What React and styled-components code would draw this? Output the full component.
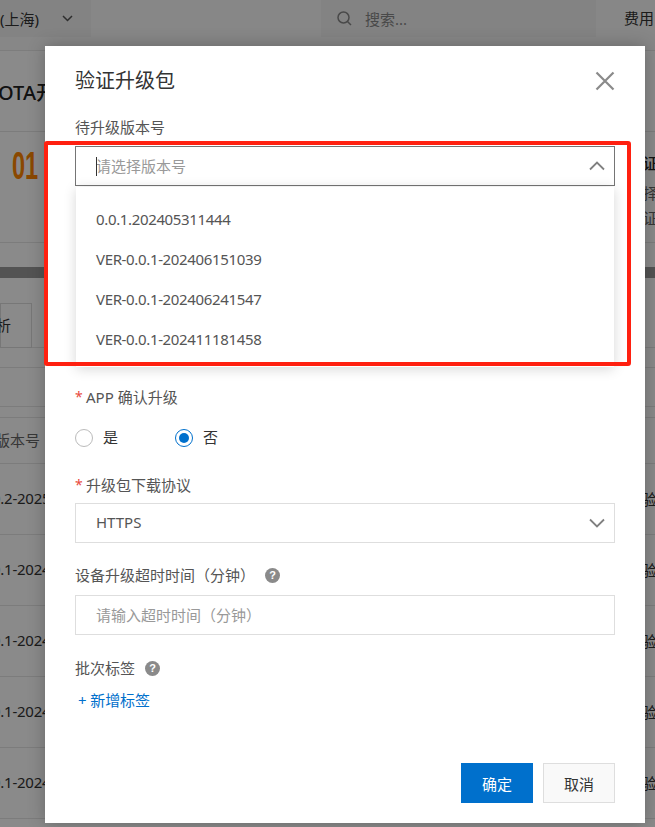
import React from "react";
import styled, { createGlobalStyle } from "styled-components";

const FONT = `"Noto Sans", "Noto Sans CJK SC", sans-serif`;
const VERSIONS = [
	"0.0.1.202405311444",
	"VER-0.0.1-202406151039",
	"VER-0.0.1-202406241547",
	"VER-0.0.1-202411181458",
];
const ROWS = ["0.2-2025", "0.1-2024", "0.1-2024", "0.1-2024", "0.1-2024"];

const Global = createGlobalStyle`
	html, body {
		margin: 0;
		padding: 0;
		height: 100%;
		overflow: hidden;
		background: #fff;
	}
	* {
		box-sizing: border-box;
	}
`;

const Page = styled.div`
	width: 655px;
	height: 827px;
	overflow: hidden;
	position: relative;
	font-family: ${FONT};
	font-size: 15px;
	color: #333;
`;

const TopBar = styled.div`
	height: 51px;
	display: flex;
	background: #fafafa;
	border-bottom: 1px solid #e8e8e8;
	align-items: flex-start;
`;

const RegionSelect = styled.div`
	width: 91px;
	height: 37px;
	background: #f2f2f2;
	display: flex;
	align-items: center;
	justify-content: space-between;
	padding: 0 18px 0 0;
	white-space: nowrap;
`;

const RegionChevron = styled.svg`
	width: 11px;
	height: 7px;
`;

const SearchBox = styled.div`
	width: 275px;
	height: 37px;
	margin-left: 230px;
	background: #f2f2f2;
	display: flex;
	align-items: center;
	gap: 13px;
	padding-left: 16px;
	color: #888;
`;

const Fee = styled.div`
	margin-left: 28px;
	height: 37px;
	line-height: 37px;
	white-space: nowrap;
`;

const TitleRow = styled.div`
	height: 81px;
	display: flex;
	align-items: center;
	border-bottom: 1px solid #e5e5e5;
	background: #fff;
	font-size: 20px;
	font-weight: 500;
	margin-left: -2px;
	white-space: nowrap;
	color: #222;
`;

const StepRow = styled.div`
	height: 111px;
	display: flex;
	justify-content: space-between;
	background: #fff;
	border-bottom: 1px solid #e5e5e5;
`;

const StepNumber = styled.div`
	margin: 12px 0 0 12px;
	font-family: "Liberation Sans", sans-serif;
	font-size: 38px;
	font-weight: 700;
	line-height: 44px;
	color: #ff8500;
	transform: scaleX(0.62);
	transform-origin: left center;
`;

const StepText = styled.div`
	width: 12px;
	overflow: hidden;
	display: flex;
	flex-direction: column;
	white-space: nowrap;
	color: #666;
	span {
		line-height: 24px;
		height: 24px;
		flex: none;
	}
	span:first-child {
		color: #222;
		font-weight: 500;
		margin: 19px 0 6px;
	}
	span:nth-child(2) {
		margin-bottom: 1px;
	}
`;

const Divider = styled.div`
	height: 11px;
	margin-top: 24px;
	background: #999;
`;

const Tabs = styled.div`
	height: 70px;
	padding-top: 25px;
	background: #fff;
	border-bottom: 1px solid #e5e5e5;
`;

const Tab = styled.div`
	width: 32px;
	height: 45px;
	border: 1px solid #ddd;
	line-height: 42px;
	padding-right: 20px;
	white-space: nowrap;
	direction: rtl;
`;

const FilterRow = styled.div`
	height: ${(p) => p.$height}px;
	background: #fff;
	border-bottom: 1px solid #e5e5e5;
`;

const TableHead = styled.div`
	height: 47px;
	margin-top: 10px;
	display: flex;
	align-items: center;
	background: #fff;
	border-top: 1px solid #e5e5e5;
	border-bottom: 1px solid #e5e5e5;
	color: #666;
	white-space: nowrap;
	overflow: hidden;
	padding-bottom: 2px;
	span {
		margin-left: -5px;
	}
`;

const TableRow = styled.div`
	height: 71px;
	display: flex;
	justify-content: space-between;
	align-items: center;
	background: #fff;
	border-bottom: 1px solid #e5e5e5;
	white-space: nowrap;
	padding-bottom: 2px;
`;

const RowVersion = styled.span`
	margin-left: -8px;
	letter-spacing: -0.25px;
`;

const RowAction = styled.span`
	margin-right: -2px;
`;

const Overlay = styled.div`
	position: absolute;
	inset: 0;
	background: rgba(0, 0, 0, 0.46);
`;

const Modal = styled.div`
	position: absolute;
	left: 45px;
	top: 46px;
	width: 600px;
	height: 777px;
	background: #fff;
	padding: 0 30px;
	display: flex;
	flex-direction: column;
	box-shadow: 0 0 16px rgba(0, 0, 0, 0.25);
`;

const ModalHeader = styled.div`
	height: 72px;
	display: flex;
	justify-content: space-between;
	align-items: center;
	padding-bottom: 2px;
	h2 {
		margin: 0;
		font-size: 20px;
		line-height: 26px;
		font-weight: 400;
		color: #333;
	}
`;

const Close = styled.svg`
	width: 20px;
	height: 20px;
`;

const Label = styled.div`
	height: 20px;
	line-height: 20px;
	display: flex;
	align-items: center;
	color: #555;
	white-space: nowrap;
	margin-top: ${(p) => p.$top || 0}px;
	margin-bottom: ${(p) => p.$bottom ?? 8}px;
`;

const Star = styled.span`
	color: #e84a3c;
	width: 11px;
	font-size: 14px;
`;

const Help = styled.span`
	width: 15px;
	height: 15px;
	margin-left: 10px;
	border-radius: 50%;
	background: #8a8a8a;
	color: #fff;
	font-family: "Liberation Sans", sans-serif;
	font-size: 11px;
	font-weight: 700;
	line-height: 15px;
	text-align: center;
`;

const Field = styled.div`
	height: 40px;
	border: 1px solid ${(p) => (p.$active ? "#757575" : "#dedede")};
	padding: 0 9px 2px 20px;
	display: flex;
	align-items: center;
	justify-content: space-between;
	color: ${(p) => (p.$muted ? "#999" : "#555")};
	position: relative;
`;

const Caret = styled.i`
	position: absolute;
	left: 20px;
	top: 10px;
	width: 1px;
	height: 19px;
	background: #333;
`;

const Chevron = styled.svg`
	width: 16px;
	height: 10px;
	margin-top: 2px;
`;

const SelectArea = styled.div`
	position: relative;
`;

const Dropdown = styled.ul`
	position: absolute;
	z-index: 2;
	left: 1px;
	right: 1px;
	top: 41px;
	height: 180px;
	margin: 0;
	padding: 12px 0 0;
	list-style: none;
	background: #fff;
	box-shadow: 0 2px 12px rgba(0, 0, 0, 0.16);
`;

const Option = styled.li`
	height: 40px;
	line-height: 40px;
	padding-left: 20px;
	color: #555;
	letter-spacing: -0.35px;
`;

const RadioRow = styled.div`
	display: flex;
	height: 20px;
	margin: 21px 0 27px;
`;

const RadioItem = styled.label`
	width: 100px;
	display: flex;
	align-items: center;
	gap: 10px;
	color: #333;
	line-height: 18px;
`;

const RadioDot = styled.span`
	width: 18px;
	height: 18px;
	border-radius: 50%;
	border: 1px solid ${(p) => (p.$on ? "#0070cc" : "#bbb")};
	display: flex;
	align-items: center;
	justify-content: center;
	&::after {
		content: "";
		width: 10px;
		height: 10px;
		border-radius: 50%;
		background: ${(p) => (p.$on ? "#0070cc" : "transparent")};
	}
`;

const RadioText = styled.span`
	margin-top: -2px;
`;

const AddLink = styled.div`
	color: #0070cc;
	height: 20px;
	line-height: 20px;
	margin: 12px 0 0 3px;
	letter-spacing: -0.1px;
`;

const Footer = styled.div`
	margin-top: auto;
	margin-bottom: 20px;
	display: flex;
	justify-content: flex-end;
	gap: 10px;
`;

const Button = styled.button`
	width: 72px;
	height: 40px;
	border: 1px solid ${(p) => (p.$primary ? "#0070cc" : "#dedede")};
	background: ${(p) => (p.$primary ? "#0070cc" : "#f9f9f9")};
	color: ${(p) => (p.$primary ? "#fff" : "#333")};
	font-family: ${FONT};
	font-size: 15px;
	padding: 0;
`;

const Annotation = styled.div`
	position: absolute;
	z-index: 3;
	left: 44px;
	top: 141px;
	width: 587px;
	height: 225px;
	border: 4px solid #ff2010;
	border-radius: 3px;
	pointer-events: none;
`;

const ChevronDown = () => (
	<Chevron viewBox="0 0 16 10">
		<path d="M1 1.5 L8 8.5 L15 1.5" fill="none" stroke="#808080" strokeWidth="1.8" />
	</Chevron>
);

const ChevronUp = () => (
	<Chevron viewBox="0 0 16 10">
		<path d="M1 8.5 L8 1.5 L15 8.5" fill="none" stroke="#808080" strokeWidth="1.8" />
	</Chevron>
);

export default function App() {
	return (
		<Page>
			<Global />
			<TopBar>
				<RegionSelect>
					(上海)
					<RegionChevron viewBox="0 0 11 7">
						<path d="M1 1 L5.5 5.5 L10 1" fill="none" stroke="#555" strokeWidth="1.5" />
					</RegionChevron>
				</RegionSelect>
				<SearchBox>
					<svg width="15" height="15" viewBox="0 0 15 15">
						<circle cx="6.5" cy="6.5" r="5.5" fill="none" stroke="#888" strokeWidth="1.5" />
						<path d="M10.5 10.5 L14 14" stroke="#888" strokeWidth="1.5" />
					</svg>
					搜索...
				</SearchBox>
				<Fee>费用</Fee>
			</TopBar>
			<TitleRow>OTA开</TitleRow>
			<StepRow>
				<StepNumber>01</StepNumber>
				<StepText>
					<span>证</span>
					<span>择</span>
					<span>证</span>
				</StepText>
			</StepRow>
			<Divider />
			<Tabs>
				<Tab>分析</Tab>
			</Tabs>
			<FilterRow $height={20} />
			<FilterRow $height={39} />
			<TableHead>
				<span>版本号</span>
			</TableHead>
			{ROWS.map((row, i) => (
				<TableRow key={i}>
					<RowVersion>{row}</RowVersion>
					<RowAction>验</RowAction>
				</TableRow>
			))}
			<Overlay />
			<Modal>
				<ModalHeader>
					<h2>验证升级包</h2>
					<Close viewBox="0 0 20 20">
						<path d="M1.5 1.5 L18.5 18.5 M18.5 1.5 L1.5 18.5" stroke="#8a8a8a" strokeWidth="2.2" />
					</Close>
				</ModalHeader>
				<Label $top={-1} $bottom={9}>
					待升级版本号
				</Label>
				<SelectArea>
					<Field $active $muted>
						<Caret />
						请选择版本号
						<ChevronUp />
					</Field>
					<Dropdown>
						{VERSIONS.map((v) => (
							<Option key={v}>{v}</Option>
						))}
					</Dropdown>
				</SelectArea>
				<Label $top={201} $bottom={0}>
					<Star>*</Star>APP 确认升级
				</Label>
				<RadioRow>
					<RadioItem>
						<RadioDot />
						<RadioText>是</RadioText>
					</RadioItem>
					<RadioItem>
						<RadioDot $on />
						<RadioText>否</RadioText>
					</RadioItem>
				</RadioRow>
				<Label>
					<Star>*</Star>升级包下载协议
				</Label>
				<Field>
					HTTPS
					<ChevronDown />
				</Field>
				<Label $top={22} $bottom={10}>
					设备升级超时时间（分钟）<Help>?</Help>
				</Label>
				<Field $muted>请输入超时时间（分钟）</Field>
				<Label $top={23} $bottom={0}>
					批次标签<Help>?</Help>
				</Label>
				<AddLink>+ 新增标签</AddLink>
				<Footer>
					<Button $primary>确定</Button>
					<Button>取消</Button>
				</Footer>
			</Modal>
			<Annotation />
		</Page>
	);
}
